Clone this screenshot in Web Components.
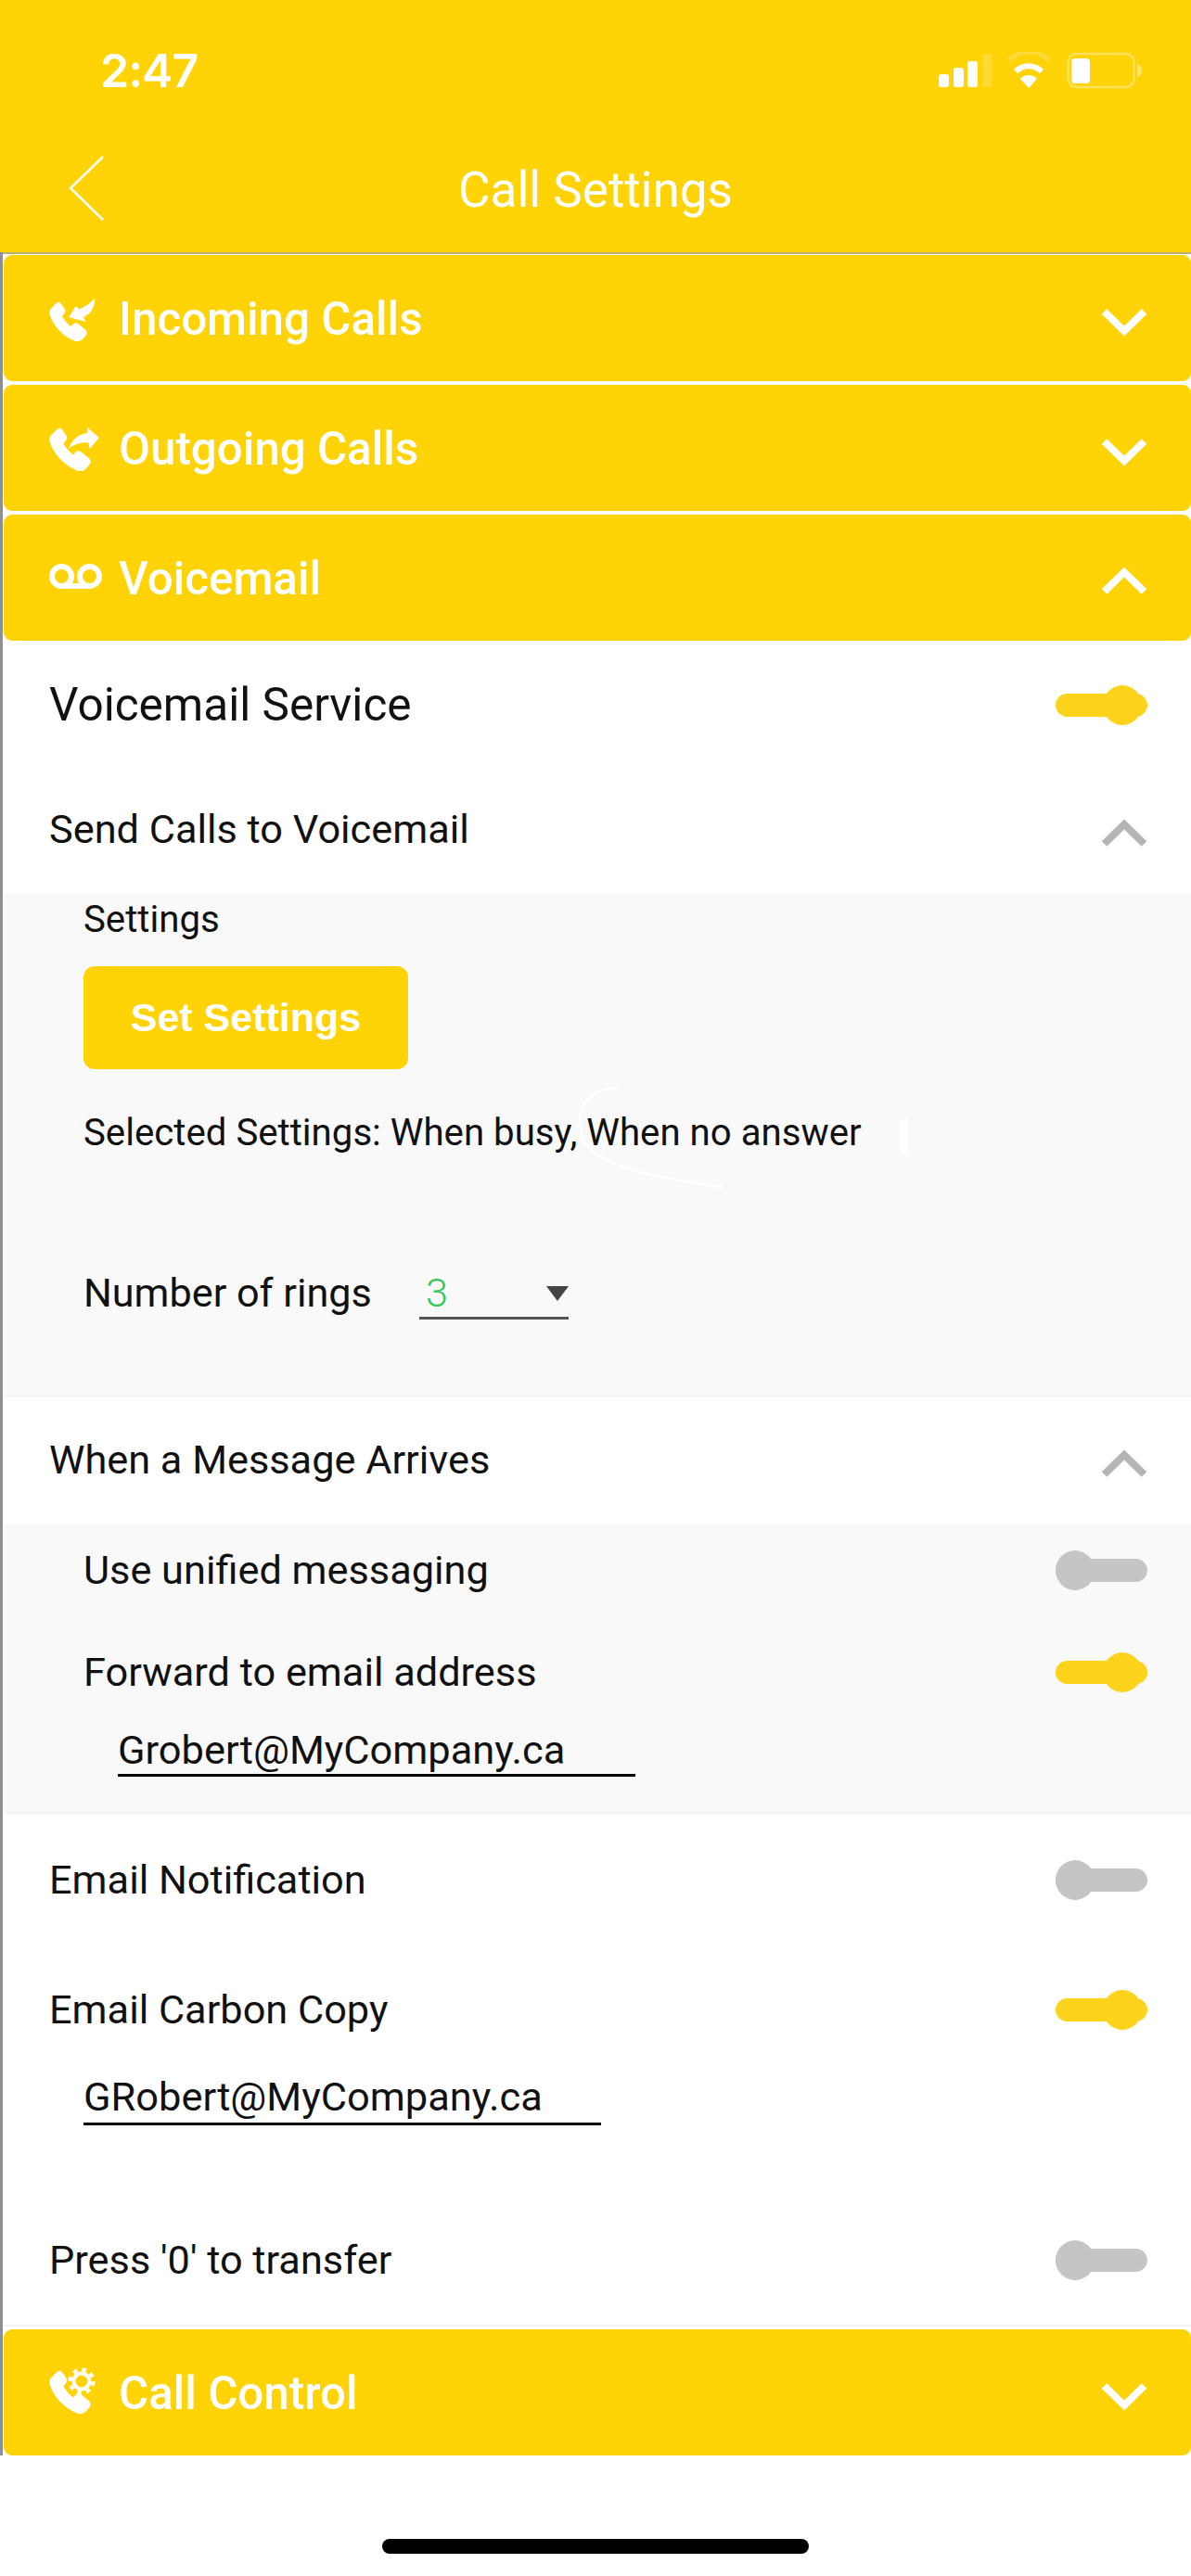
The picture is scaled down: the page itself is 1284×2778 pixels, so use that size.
<!DOCTYPE html>
<html lang="en"><head><meta charset="utf-8"><title>Call Settings</title>
<style>
html,body{margin:0;padding:0;background:#fff}
body{width:1284px;height:2778px;overflow:hidden;font-family:Roboto,"Liberation Sans",sans-serif;color:#111}
</style></head><body>
<template id="chev"><svg width="50" height="32" viewBox="0 0 50 32" style="display:block"><path d="M3.500 5 25 26 46.500 5" fill="none" stroke="currentColor" stroke-width="8"/></svg></template>
<app-screen>
  <status-bar slot="head"></status-bar>
  <nav-bar slot="head" title-text="Call Settings"></nav-bar>
  <section-bar label="Incoming Calls">
    <svg slot="icon" width="56" height="50" viewBox="0 0 56 50" fill="#fff"><path d="M1 16 7.500 9Q10.500 7 12.500 9L17 15.500Q18 18 16.500 20L14 23Q17 29 23.500 34L26.500 31Q28.500 29.500 31 31L39 37.500Q41.500 40 40 43L36 48Q31 51.500 27 49.500C14 44 4 33 .5 21Q0 18 1 16Z"/><path d="M21 24 29 12 32.500 15.500C39 12.500 45 9 49 3 50 12 45 21 37 24L39.500 29Z"/></svg>
  </section-bar>
  <section-bar label="Outgoing Calls">
    <svg slot="icon" width="56" height="50" viewBox="0 0 56 50" fill="#fff"><path d="M1 16 7.500 9Q10.500 7 12.500 9L17 15.500Q18 18 16.500 20L14 23Q17 29 23.500 34L26.500 31Q28.500 29.500 31 31L39 37.500Q41.500 40 40 43L36 48Q31 51.500 27 49.500C14 44 4 33 .5 21Q0 18 1 16Z" transform="translate(0 -5) scale(1.1)"/><path d="M54 14 41 3 41.500 9C31 10 24 17 21 26 27 21 35 18.500 42.500 19.500L43.500 26Z"/></svg>
  </section-bar>
  <section-bar label="Voicemail" open>
    <svg slot="icon" width="58" height="50" viewBox="0 0 58 50" fill="none" stroke="#fff" stroke-width="6"><circle cx="13.500" cy="23.500" r="10.500"/><circle cx="43.500" cy="23.500" r="10.500"/><path d="M13.500 34H43.500"/></svg>
  </section-bar>

  <setting-row h="138" size="49.5"><span>Voicemail Service</span><toggle-switch slot="end" on></toggle-switch></setting-row>
  <setting-row h="134" shift="4"><span>Send Calls to Voicemail</span><fold-chevron slot="end"></fold-chevron></setting-row>
  <sub-panel>
    <plain-line>Settings</plain-line>
    <yellow-button>Set Settings</yellow-button>
    <plain-line gap="40">Selected Settings: When busy, When no answer</plain-line>
    <rings-select></rings-select>
    <ink-artifact></ink-artifact>
  </sub-panel>
  <setting-row h="138"><span>When a Message Arrives</span><fold-chevron slot="end"></fold-chevron></setting-row>
  <sub-panel class="flush">
    <setting-row h="100" inset="86"><span>Use unified messaging</span><toggle-switch slot="end"></toggle-switch></setting-row>
    <setting-row h="120" inset="86"><span>Forward to email address</span><toggle-switch slot="end" on></toggle-switch></setting-row>
    <underline-field inset="123" bottom="39">Grobert@MyCompany.ca</underline-field>
  </sub-panel>
  <setting-row h="144"><span>Email Notification</span><toggle-switch slot="end"></toggle-switch></setting-row>
  <setting-row h="136"><span>Email Carbon Copy</span><toggle-switch slot="end" on></toggle-switch></setting-row>
  <underline-field inset="90" bottom="75">GRobert@MyCompany.ca</underline-field>
  <setting-row h="140"><span>Press '0' to transfer</span><toggle-switch slot="end"></toggle-switch></setting-row>
  <section-bar label="Call Control" class="last">
    <svg slot="icon" width="56" height="60" viewBox="0 0 56 60" fill="#fff"><path d="M1 16 7.500 9Q10.500 7 12.500 9L17 15.500Q18 18 16.500 20L14 23Q17 29 23.500 34L26.500 31Q28.500 29.500 31 31L39 37.500Q41.500 40 40 43L36 48Q31 51.500 27 49.500C14 44 4 33 .5 21Q0 18 1 16Z" transform="translate(0 -2) scale(1.1)"/><circle cx="35" cy="18" r="8.500" fill="none" stroke="#fff" stroke-width="4"/><circle cx="35" cy="18" r="12.500" fill="none" stroke="#fff" stroke-width="4" stroke-dasharray="4.800 5"/></svg>
  </section-bar>
  <home-indicator></home-indicator>
</app-screen>
<script>
const Y='#ffd305';
function def(name,css,html,init){
  customElements.define(name,class extends HTMLElement{
    connectedCallback(){
      if(this.shadowRoot)return;
      const r=this.attachShadow({mode:'open'});
      r.innerHTML='<style>'+css+'</style>'+(typeof html==='function'?html(this):html);
      if(init)init(this,r);
    }
  });
}
const chev=()=>document.getElementById('chev').innerHTML;
def('app-screen',`:host{display:block;width:1284px;height:2778px;position:relative;background:#fff}
 .rail{position:absolute;left:0;top:272px;width:3px;height:2376px;background:#8e8e93}
 .list{display:flex;flex-direction:column}`,
 `<slot name="head"></slot><div class="rail"></div><div class="list"><slot></slot></div>`);
def('status-bar',`:host{display:flex;height:132px;background:${Y};box-sizing:border-box;justify-content:space-between;align-items:flex-start;color:#fff}
 .t{font:600 50px/1 Inter,"Liberation Sans",sans-serif;margin:51px 0 0 108px;letter-spacing:-1px}
 svg{display:block;margin:56px 50px 0 0}`,
 `<div class="t">2:47</div><svg width="222" height="44" viewBox="1012 56 222 44" fill="#fff">
  <rect x="1012" y="80" width="11" height="14" rx="3"/><rect x="1028" y="73" width="11" height="21" rx="3"/><rect x="1043" y="66" width="11" height="28" rx="3"/><rect x="1059" y="58" width="11" height="36" rx="3" opacity=".18"/>
  <path d="M1087 67a32 32 0 0 1 44 0" fill="none" stroke="#fff" stroke-width="5" opacity=".2" transform="translate(0 -2)"/>
  <path d="M1095 77a20 20 0 0 1 28 0" fill="none" stroke="#fff" stroke-width="6"/><path d="M1100 85a12 12 0 0 1 18 0L1109 95z"/>
  <rect x="1151.500" y="58" width="71" height="36" rx="9" fill="none" stroke="#fff" stroke-width="2.500" opacity=".35"/><rect x="1155" y="63" width="20" height="27" rx="4"/><path d="M1226 68q5 3 5 8t-5 8z" opacity=".4"/></svg>`);
def('nav-bar',`:host{display:flex;height:140px;background:${Y};border-bottom:2px solid #b9ad78;align-items:center;justify-content:center;position:relative;color:#fff;font:400 53px/1 Roboto,sans-serif}
 svg{position:absolute;left:74px;top:35px} .t{margin-top:7px}`,
 h=>`<svg width="38" height="72" viewBox="0 0 38 72" fill="none" stroke="#fff" stroke-width="2.500"><path d="M37 2 2 36 37 70"/></svg><div class="t">${h.getAttribute('title-text')}</div>`);
def('section-bar',`:host{display:block;margin-top:4px;margin-left:4px}
 :host(:first-of-type){margin-top:1px}
 :host(.last){margin-top:0;border-top:2px solid #f3f3f3;padding-top:3px}
 .b{height:136px;background:${Y};border-radius:9px;display:flex;align-items:center;color:#fff;font:500 49.3px/1 Roboto,sans-serif;box-sizing:border-box;padding:0 47px 0 49px}
 .i{width:75px;display:flex;align-items:center}
 .l{flex:1;margin-top:4px}
 .c{display:block;margin-top:8px}`,
 h=>`<div class="b"><div class="i"><slot name="icon"></slot></div><div class="l">${h.getAttribute('label')}</div><div class="c" style="${h.hasAttribute('open')?'transform:scaleY(-1)':''}">${chev()}</div></div>`);
def('setting-row',`:host{display:flex;align-items:center;justify-content:space-between;box-sizing:border-box;font-family:Roboto,sans-serif;color:#111}`,
 `<div class="l"><slot></slot></div><slot name="end"></slot>`,
 (h)=>{const s=h.style;s.height=h.getAttribute('h')+'px';const ins=+(h.getAttribute('inset')||53);s.paddingLeft=ins+'px';s.paddingRight='47px';s.fontSize=(h.getAttribute('size')||43.3)+'px';s.paddingBottom=(h.getAttribute('shift')||0)+'px';});
def('toggle-switch',`:host{display:block;width:99px;height:43px;position:relative}
 .tr{position:absolute;left:0;right:0;top:9px;height:25px;border-radius:13px;background:#c4c6c6}
 .th{position:absolute;left:0;top:0;width:42px;height:43px;border-radius:50%;background:#c4c6c6}
 :host([on]) .tr,:host([on]) .th{background:#fdd31c}
 :host([on]) .th{left:51px}`,`<div class="tr"></div><div class="th"></div>`);
def('fold-chevron',`:host{display:block;color:#b5b5b5;margin-top:10px;transform:scaleY(-1)}`,()=>chev());
def('sub-panel',`:host{display:flex;flex-direction:column;align-items:flex-start;margin-left:4px;background:#f9f9f9;box-shadow:0 1px 0 #f0f0f0;position:relative;padding:0 0 81px 86px}
 :host(.flush){padding:0;align-items:stretch}`,`<slot></slot>`);
def('plain-line',`:host{display:block;font:40.2px/58px Roboto,sans-serif;color:#111;margin-bottom:-4px}`,`<slot></slot>`,h=>{if(h.getAttribute('gap'))h.style.marginTop=h.getAttribute('gap')+'px'});
def('yellow-button',`:host{display:flex;align-items:center;justify-content:center;width:350px;height:111px;margin-top:25px;border-radius:12px;background:${Y};color:#fff;font:700 43px/1 "Liberation Sans",sans-serif}`,`<slot></slot>`);
def('rings-select',`:host{display:flex;align-items:flex-start;margin-top:119px;font:43.2px/58px Roboto,sans-serif;color:#111;position:relative}
 .s{margin-left:51px;width:161px;height:54px;border-bottom:3px solid #555;position:relative;color:#34c759;font-weight:300}
 .v{padding-left:7px}
 .a{position:absolute;right:0;top:21px;width:0;height:0;border-left:12px solid transparent;border-right:12px solid transparent;border-top:16px solid #444}`,
 `<span>Number of rings</span><div class="s"><div class="v">3</div><div class="a"></div></div>`);
def('ink-artifact',`:host{position:absolute;left:616px;top:205px;width:370px;height:115px;display:block;pointer-events:none}`,
 `<svg width="370" height="115" viewBox="620 1168 370 115" fill="none" stroke="#fff"><path d="M665 1173C628 1176 618 1200 630 1232 644 1254 690 1268 778 1280" stroke-width="2.500"/><path d="M975 1207V1246" stroke-width="8"/></svg>`);
def('underline-field',`:host{display:block;box-sizing:border-box;font:43.4px/1 Roboto,sans-serif;color:#111}
 .f{width:558px;box-sizing:border-box;border-bottom:3px solid #000;line-height:50px}`,`<div class="f"><slot></slot></div>`,
 h=>{h.style.paddingLeft=h.getAttribute('inset')+'px';h.style.paddingBottom=h.getAttribute('bottom')+'px';if(h.getAttribute('inset')==='90')h.shadowRoot.querySelector('.f').style.lineHeight='54px'});
def('home-indicator',`:host{display:block;width:460px;height:16px;border-radius:8px;background:#000;margin:90px auto 0}`,``);
</script>
</body></html>
